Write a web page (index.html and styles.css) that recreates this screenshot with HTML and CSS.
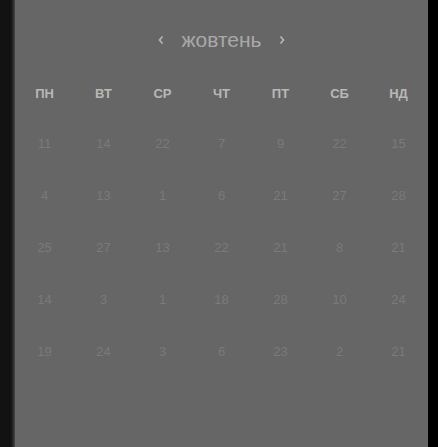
FILE: index.html
```html
<!DOCTYPE html>
<html lang="uk">
<head>
<meta charset="utf-8">
<link rel="stylesheet" href="styles.css">
</head>
<body>
<div class="screen">
  <div class="side-left"></div>
  <div class="panel">
    <div class="header">
      <span class="chev">
        <svg width="8" height="12" viewBox="0 0 8 12"><path d="M5.5 2.5 L2.5 6 L5.5 9.5" fill="none" stroke="currentColor" stroke-width="1.7"/></svg>
      </span>
      <span class="month">жовтень</span>
      <span class="chev">
        <svg width="8" height="12" viewBox="0 0 8 12"><path d="M2.5 2.5 L5.5 6 L2.5 9.5" fill="none" stroke="currentColor" stroke-width="1.7"/></svg>
      </span>
    </div>
    <div class="weekdays">
      <span>ПН</span><span>ВТ</span><span>СР</span><span>ЧТ</span><span>ПТ</span><span>СБ</span><span>НД</span>
    </div>
    <div class="days">
      <span>11</span><span>14</span><span>22</span><span>7</span><span>9</span><span>22</span><span>15</span>
      <span>4</span><span>13</span><span>1</span><span>6</span><span>21</span><span>27</span><span>28</span>
      <span>25</span><span>27</span><span>13</span><span>22</span><span>21</span><span>8</span><span>21</span>
      <span>14</span><span>3</span><span>1</span><span>18</span><span>28</span><span>10</span><span>24</span>
      <span>19</span><span>24</span><span>3</span><span>6</span><span>23</span><span>2</span><span>21</span>
    </div>
  </div>
  <div class="side-right"></div>
</div>
</body>
</html>
```
FILE: styles.css
```css
html, body {
  margin: 0;
  padding: 0;
  background: #111;
}
.screen {
  display: flex;
  width: 438px;
  height: 447px;
  overflow: hidden;
  font-family: "Liberation Sans", Arial, sans-serif;
}
.side-left {
  width: 15px;
  flex: none;
  background: linear-gradient(to right, #121212 0, #121212 11px, #2a2a2a 13px, #4a4a4a 15px);
}
.panel {
  width: 413px;
  flex: none;
  background: #666;
}
.side-right {
  flex: 1;
  background: #000;
}
.header {
  display: flex;
  justify-content: center;
  align-items: center;
  gap: 16px;
  padding-top: 28px;
  height: 24px;
}
.month {
  font-size: 21px;
  line-height: 24px;
  color: #a9a9a9;
}
.chev {
  display: flex;
  color: #b4b4b4;
}
.weekdays {
  display: grid;
  grid-template-columns: repeat(7, 1fr);
  margin-top: 32px;
  height: 20px;
  line-height: 20px;
  font-size: 13px;
  font-weight: bold;
  color: #b8b8b8;
  text-align: center;
}
.days {
  display: grid;
  grid-template-columns: repeat(7, 1fr);
  grid-auto-rows: 52px;
  margin-top: 14px;
  line-height: 52px;
  font-size: 13px;
  color: #7a7a7a;
  text-align: center;
}
```
